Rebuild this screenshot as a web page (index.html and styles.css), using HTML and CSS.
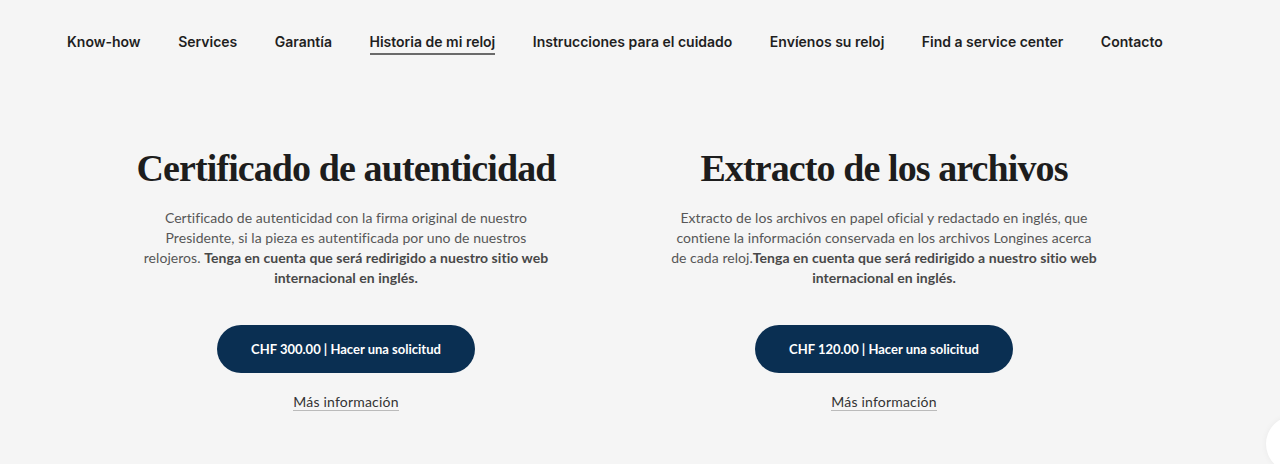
FILE: index.html
```html
<!DOCTYPE html>
<html lang="es">
<head>
<meta charset="utf-8">
<link rel="stylesheet" href="styles.css">
</head>
<body>
<nav class="nav">
  <a class="nav-item">Know-how</a>
  <a class="nav-item">Services</a>
  <a class="nav-item">Garantía</a>
  <a class="nav-item active">Historia de mi reloj</a>
  <a class="nav-item">Instrucciones para el cuidado</a>
  <a class="nav-item">Envíenos su reloj</a>
  <a class="nav-item">Find a service center</a>
  <a class="nav-item">Contacto</a>
</nav>
<main class="cards">
  <section class="card">
    <h2 class="card-title">Certificado de autenticidad</h2>
    <p class="card-text card-text-narrow">Certificado de autenticidad con la firma original de nuestro Presidente, si la pieza es autentificada por uno de nuestros relojeros. <strong>Tenga en cuenta que será redirigido a nuestro sitio web internacional en inglés.</strong></p>
    <a class="btn">CHF 300.00 | Hacer una solicitud</a>
    <a class="more">Más información</a>
  </section>
  <section class="card">
    <h2 class="card-title">Extracto de los archivos</h2>
    <p class="card-text">Extracto de los archivos en papel oficial y redactado en inglés, que contiene la información conservada en los archivos Longines acerca de cada reloj.<strong>Tenga en cuenta que será redirigido a nuestro sitio web internacional en inglés.</strong></p>
    <a class="btn">CHF 120.00 | Hacer una solicitud</a>
    <a class="more">Más información</a>
  </section>
</main>
<div class="chat"></div>
</body>
</html>
```
FILE: styles.css
```css
html, body {
  margin: 0;
  padding: 0;
}
body {
  background: #f5f5f5;
  font-family: Lato, "Liberation Sans", sans-serif;
  color: #222;
  height: 464px;
  overflow: hidden;
  position: relative;
}
.nav {
  display: flex;
  gap: 37.5px;
  padding: 31px 0 0 67px;
  height: 33px;
}
.nav-item {
  font-family: Inter, sans-serif;
  font-size: 14px;
  font-weight: 600;
  color: #1f1f1f;
  line-height: 22px;
  height: 22px;
}
.nav-item.active {
  border-bottom: 2px solid #6a6a6a;
}
.cards {
  display: grid;
  grid-template-columns: 538px 538px;
  margin: 82px 0 0 77px;
}
.card {
  display: flex;
  flex-direction: column;
  align-items: center;
  text-align: center;
}
.card-title {
  font-family: "Liberation Serif", serif;
  font-weight: 700;
  font-size: 38px;
  line-height: 44px;
  margin: 0;
  color: #1d1d1d;
  letter-spacing: -0.9px;
}
.card-text {
  font-family: Lato, sans-serif;
  font-size: 14px;
  line-height: 20px;
  color: #575757;
  width: 432px;
  margin: 18px 0 0;
  letter-spacing: 0.05px;
}
.card-text-narrow {
  width: 412px;
}
.card-text strong {
  font-weight: 700;
  color: #484848;
}
.btn {
  margin-top: 37px;
  width: 258px;
  height: 48px;
  border-radius: 24px;
  background: #0a2f52;
  color: #fff;
  font-family: Lato, sans-serif;
  font-weight: 700;
  font-size: 13px;
  display: flex;
  align-items: center;
  justify-content: center;
}
.more {
  margin-top: 20px;
  font-family: Lato, sans-serif;
  font-size: 14px;
  font-weight: 400;
  color: #333;
  line-height: 17px;
  letter-spacing: 0.2px;
  border-bottom: 1.5px solid #bbb;
}
.chat {
  position: absolute;
  left: 1266px;
  top: 416px;
  width: 56px;
  height: 56px;
  border-radius: 50%;
  background: #fff;
  box-shadow: 0 0 6px rgba(0,0,0,0.05);
}
```
